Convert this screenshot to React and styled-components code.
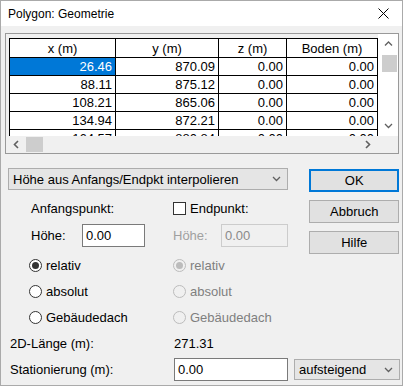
import React from 'react';
import styled, { createGlobalStyle } from 'styled-components';

const GlobalStyle = createGlobalStyle`
  html, body {
    margin: 0;
    padding: 0;
    background: #ffffff;
  }
  body {
    font-family: "Liberation Sans", Arial, sans-serif;
    font-size: 13px;
    color: #000;
  }
`;

const Window = styled.div`
  width: 403px;
  height: 386px;
  box-sizing: border-box;
  border: 1px solid #aaaaaa;
  background: #f0f0f0;
  display: flex;
  flex-direction: column;
`;

const TitleBar = styled.div`
  height: 25px;
  background: #ffffff;
  display: flex;
  align-items: center;
  justify-content: space-between;
  padding: 0 13px 0 7px;
  font-size: 12px;
`;

const Body = styled.div`
  padding: 7px 3px 0 4px;
  display: flex;
  flex-direction: column;
`;

const GridFrame = styled.div`
  height: 121px;
  box-sizing: border-box;
  border: 1px solid #999999;
  display: grid;
  grid-template-columns: 1fr 20px;
  grid-template-rows: 1fr 17px;
  background: #f0f0f0;
`;

const GridArea = styled.div`
  overflow: hidden;
  padding: 4px 0 0 3px;
`;

const Table = styled.div`
  display: grid;
  grid-template-columns: 106px 103px 68px 91px;
  grid-auto-rows: 18px;
  grid-template-rows: 19px;
  border-left: 1px solid #000;
  border-top: 1px solid #000;
  width: 369px;
  box-sizing: border-box;
`;

const Cell = styled.div`
  box-sizing: border-box;
  border-right: 1px solid #000;
  border-bottom: 1px solid #000;
  background: ${(p) => (p.$selected ? '#0078d7' : '#ffffff')};
  color: ${(p) => (p.$selected ? '#ffffff' : '#000')};
  display: flex;
  align-items: center;
  justify-content: ${(p) => (p.$head ? 'center' : 'flex-end')};
  padding-right: ${(p) => (p.$head ? '0' : '3px')};
  white-space: nowrap;
`;

const VScroll = styled.div`
  background: #ffffff;
  display: flex;
  flex-direction: column;
  align-items: center;
`;

const ArrowBox = styled.div`
  height: ${(p) => p.$h || 20}px;
  width: ${(p) => p.$w || 20}px;
  display: flex;
  align-items: center;
  justify-content: center;
  flex-shrink: 0;
`;

const VThumb = styled.div`
  width: 15px;
  height: 17px;
  margin: 1px 0 0 2px;
  background: #cdcdcd;
`;

const HScroll = styled.div`
  display: flex;
  align-items: center;
  background: #f0f0f0;
`;

const HThumb = styled.div`
  width: 17px;
  height: 15px;
  background: #cdcdcd;
`;

const Spacer = styled.div`
  flex: 1;
`;

const Lower = styled.div`
  display: flex;
  margin-top: 14px;
  padding-left: 3px;
`;

const LeftCol = styled.div`
  width: 282px;
  display: flex;
  flex-direction: column;
`;

const Select = styled.div`
  height: 22px;
  box-sizing: border-box;
  width: ${(p) => p.$w || 'auto'};
  border: 1px solid #adadad;
  background: #e5e5e5;
  display: flex;
  align-items: center;
  justify-content: space-between;
  padding: 0 6px 0 4px;
  white-space: nowrap;
`;

const PointGrid = styled.div`
  display: grid;
  grid-template-columns: 142px 1fr;
  padding-left: 23px;
  row-gap: 8px;
  margin-top: 10px;
  grid-template-rows: 16px 23px;
`;

const Line = styled.div`
  display: flex;
  align-items: center;
  color: ${(p) => (p.$disabled ? '#a0a0a0' : '#000')};
`;

const FieldLabel = styled.span`
  width: ${(p) => p.$w}px;
  flex-shrink: 0;
`;

const Input = styled.div`
  width: ${(p) => p.$w}px;
  height: 23px;
  box-sizing: border-box;
  border: 1px solid ${(p) => (p.$disabled ? '#cccccc' : '#7a7a7a')};
  background: ${(p) => (p.$disabled ? '#f0f0f0' : '#ffffff')};
  color: ${(p) => (p.$disabled ? '#8a8a8a' : '#000')};
  display: flex;
  align-items: center;
  padding-left: 3px;
`;

const CheckBox = styled.span`
  width: 13px;
  height: 13px;
  box-sizing: border-box;
  border: 1px solid #333333;
  background: #ffffff;
  margin-right: 4px;
`;

const RadioGrid = styled.div`
  display: grid;
  grid-template-columns: 144px 1fr;
  grid-auto-rows: 16px;
  row-gap: 10px;
  padding-left: 21px;
  margin-top: 10px;
`;

const Radio = styled.span`
  width: 13px;
  height: 13px;
  box-sizing: border-box;
  border-radius: 50%;
  border: 1px solid ${(p) => (p.$disabled ? '#bcbcbc' : '#333333')};
  background: ${(p) => (p.$disabled ? '#f0f0f0' : '#ffffff')};
  margin-right: 4px;
  display: flex;
  align-items: center;
  justify-content: center;
  &::after {
    content: '';
    display: ${(p) => (p.$checked ? 'block' : 'none')};
    width: 7px;
    height: 7px;
    border-radius: 50%;
    background: ${(p) => (p.$disabled ? '#bcbcbc' : '#333333')};
  }
`;

const RadioLine = styled.div`
  display: flex;
  align-items: center;
  color: ${(p) => (p.$disabled ? '#7f7f7f' : '#000')};
`;

const ButtonCol = styled.div`
  margin: 1px 0 0 21px;
  width: 90px;
  display: flex;
  flex-direction: column;
  gap: 8px;
`;

const Button = styled.div`
  height: 23px;
  box-sizing: border-box;
  border: ${(p) => (p.$default ? '2px solid #0078d7' : '1px solid #adadad')};
  background: #e1e1e1;
  display: flex;
  align-items: center;
  justify-content: center;
`;

const InfoRow = styled.div`
  display: grid;
  grid-template-columns: 164px auto auto 1fr;
  align-items: center;
  padding-left: 5px;
  margin-top: ${(p) => p.$mt}px;
  min-height: 16px;
`;

const Chevron = ({ dir = 'down', color = '#606060' }) => {
  const pts = {
    down: '1,1 4.5,4.5 8,1',
    up: '1,4.5 4.5,1 8,4.5',
  };
  return (
    <svg width="9" height="6" viewBox="0 0 9 6">
      <polyline points={pts[dir]} fill="none" stroke={color} strokeWidth="1.3" />
    </svg>
  );
};

const SideChevron = ({ dir }) => (
  <svg width="6" height="9" viewBox="0 0 6 9">
    <polyline
      points={dir === 'left' ? '5,1 1.5,4.5 5,8' : '1,1 4.5,4.5 1,8'}
      fill="none"
      stroke="#606060"
      strokeWidth="1.6"
    />
  </svg>
);

const rows = [
  ['26.46', '870.09'],
  ['88.11', '875.12'],
  ['108.21', '865.06'],
  ['134.94', '872.21'],
  ['164.57', '880.84'],
];

export default function App() {
  return (
    <>
      <GlobalStyle />
      <Window>
        <TitleBar>
          <span>Polygon: Geometrie</span>
          <svg width="11" height="11" viewBox="0 0 11 11">
            <path d="M0.5 0.5 L10.5 10.5 M10.5 0.5 L0.5 10.5" stroke="#000" strokeWidth="1" />
          </svg>
        </TitleBar>
        <Body>
          <GridFrame>
            <GridArea>
              <Table>
                <Cell $head>x (m)</Cell>
                <Cell $head>y (m)</Cell>
                <Cell $head>z (m)</Cell>
                <Cell $head>Boden (m)</Cell>
                {rows.map((r, i) => (
                  <React.Fragment key={r[0]}>
                    <Cell $selected={i === 0}>{r[0]}</Cell>
                    <Cell>{r[1]}</Cell>
                    <Cell>0.00</Cell>
                    <Cell>0.00</Cell>
                  </React.Fragment>
                ))}
              </Table>
            </GridArea>
            <VScroll>
              <ArrowBox>
                <Chevron dir="up" />
              </ArrowBox>
              <VThumb />
              <Spacer />
              <ArrowBox>
                <Chevron dir="down" />
              </ArrowBox>
            </VScroll>
            <HScroll>
              <ArrowBox $h={17}>
                <SideChevron dir="left" />
              </ArrowBox>
              <HThumb />
              <Spacer />
              <ArrowBox $h={17}>
                <SideChevron dir="right" />
              </ArrowBox>
            </HScroll>
            <div />
          </GridFrame>

          <Lower>
            <LeftCol>
              <Select>
                <span>Höhe aus Anfangs/Endpkt interpolieren</span>
                <Chevron />
              </Select>
              <PointGrid>
                <Line>Anfangspunkt:</Line>
                <Line>
                  <CheckBox />
                  Endpunkt:
                </Line>
                <Line>
                  <FieldLabel $w={51}>Höhe:</FieldLabel>
                  <Input $w={63}>0.00</Input>
                </Line>
                <Line $disabled>
                  <FieldLabel $w={48}>Höhe:</FieldLabel>
                  <Input $w={67} $disabled>
                    0.00
                  </Input>
                </Line>
              </PointGrid>
              <RadioGrid>
                <RadioLine>
                  <Radio $checked />
                  relativ
                </RadioLine>
                <RadioLine $disabled>
                  <Radio $checked $disabled />
                  relativ
                </RadioLine>
                <RadioLine>
                  <Radio />
                  absolut
                </RadioLine>
                <RadioLine $disabled>
                  <Radio $disabled />
                  absolut
                </RadioLine>
                <RadioLine>
                  <Radio />
                  Gebäudedach
                </RadioLine>
                <RadioLine $disabled>
                  <Radio $disabled />
                  Gebäudedach
                </RadioLine>
              </RadioGrid>
            </LeftCol>
            <ButtonCol>
              <Button $default>OK</Button>
              <Button>Abbruch</Button>
              <Button>Hilfe</Button>
            </ButtonCol>
          </Lower>

          <InfoRow $mt={10}>
            <span>2D-Länge (m):</span>
            <span>271.31</span>
          </InfoRow>
          <InfoRow $mt={7}>
            <span>Stationierung (m):</span>
            <Input $w={114}>0.00</Input>
            <Select $w="106px" style={{ marginLeft: 6, height: 21 }}>
              <span>aufsteigend</span>
              <Chevron />
            </Select>
          </InfoRow>
        </Body>
      </Window>
    </>
  );
}
